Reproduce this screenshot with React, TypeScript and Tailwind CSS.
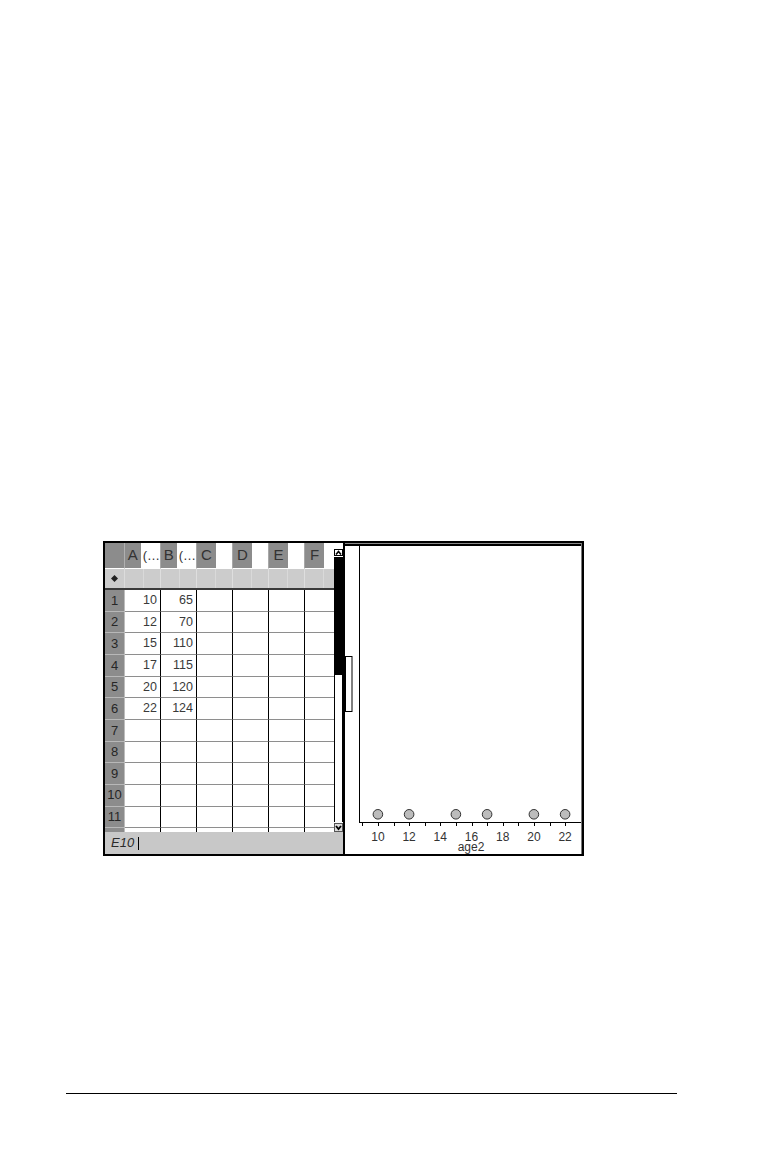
import React from "react";

const data: [string, string][] = [
  ["10", "65"],
  ["12", "70"],
  ["15", "110"],
  ["17", "115"],
  ["20", "120"],
  ["22", "124"],
];

const cols = [
  { letter: "A", name: "(…" },
  { letter: "B", name: "(…" },
  { letter: "C", name: "" },
  { letter: "D", name: "" },
  { letter: "E", name: "" },
  { letter: "F", name: "" },
];

const dots = [10, 12, 15, 17, 20, 22];
const xOf = (v: number) => 362.3 + 15.6 * (v - 9);

const Scrollbar = () => (
  <div className="flex w-[9px] flex-col bg-white">
    <div className="h-[6px]" />
    {/* up arrow */}
    <div className="h-[7px] border border-black bg-white">
      <svg width="7" height="5" viewBox="0 0 7 5" className="block">
        <polyline points="1,4.5 3.5,1.5 6,4.5" fill="none" stroke="#000" strokeWidth="1.6" />
      </svg>
    </div>
    <div className="mt-px flex h-[265px] flex-col border-x border-black">
      <div className="h-[118px] bg-black" />
    </div>
    {/* down arrow */}
    <div className="mt-px h-[9px] border border-[#555] bg-[#dcdcdc]">
      <svg width="7" height="7" viewBox="0 0 7 7" className="block">
        <polyline points="1,2 3.5,5 6,2" fill="none" stroke="#000" strokeWidth="1.8" />
      </svg>
    </div>
  </div>
);

const Spreadsheet = () => (
  <div className="flex w-[238px] flex-col">
    <div className="flex h-[289px]">
      <div className="flex w-[229px] flex-col">
        {/* column headers */}
        <div className="grid h-[26px] grid-cols-[20px_36px_36px_36px_36px_36px_29px]">
          <div className="border-r border-b border-r-[#b0b0b0] border-b-white bg-[#8c8c8c]" />
          {cols.map((c, i) => (
            <div
              key={c.letter}
              className={`flex border-b border-b-white ${i < 5 ? "border-r border-r-[#a8a8a8]" : ""}`}
            >
              <div className="flex w-[19px] items-center justify-center bg-[#8c8c8c] text-[15px] text-[#333]">
                {c.letter}
              </div>
              <div className="flex flex-1 items-center bg-white pl-[2px] text-[13px] text-[#333]">
                {c.name}
              </div>
            </div>
          ))}
        </div>

        {/* formula row */}
        <div className="grid h-[21px] grid-cols-[20px_36px_36px_36px_36px_36px_29px] border-b-2 border-b-[#3a3a3a] bg-[#cccccc]">
          <div className="flex items-center justify-center border-r border-r-[#dcdcdc]">
            <svg width="7" height="7" viewBox="0 0 7 7">
              <polygon points="3.5,0 7,3.5 3.5,7 0,3.5" fill="#222" />
            </svg>
          </div>
          {cols.map((c, i) => (
            <div key={c.letter} className={`flex ${i < 5 ? "border-r border-r-[#dedede]" : ""}`}>
              <div className="w-[19px] border-r border-r-[#d9d9d9]" />
              <div className="flex-1" />
            </div>
          ))}
        </div>

        {/* data rows */}
        <div className="flex-1 overflow-hidden">
          {Array.from({ length: 12 }).map((_, r) => (
            <div
              key={r}
              className="grid h-[21.67px] grid-cols-[20px_36px_36px_36px_36px_36px_29px] text-[12.5px] text-[#3a3a3a]"
            >
              <div className="flex items-center justify-center border-r border-b border-r-[#bdbdbd] border-b-[#b8b8b8] bg-[#8c8c8c] text-[13px] text-[#262626]">
                {r < 11 ? r + 1 : ""}
              </div>
              {cols.map((c, i) => (
                <div
                  key={c.letter}
                  className={`flex items-center justify-end border-b border-b-[#8e8e8e] bg-white pr-[3px] ${i < 5 ? "border-r border-r-black" : ""}`}
                >
                  {i < 2 && data[r] ? data[r][i] : ""}
                </div>
              ))}
            </div>
          ))}
        </div>
      </div>
      <Scrollbar />
    </div>

    {/* entry line */}
    <div className="flex h-[22px] items-center bg-[#c8c8c8] pl-[6px] text-[13px] text-[#2a2a2a]">
      <span className="italic">E10</span>
      <span className="ml-[4px] h-[13px] w-px bg-black" />
    </div>
  </div>
);

const DotPlot = () => (
  <div className="flex w-[237px] flex-col border-r border-r-[#7a7a7a]">
    <div className="h-px bg-[#8a8a8a]" />
    <div className="h-[2px] bg-black" />
    <svg width="236" height="308" viewBox="345 546 236 308" className="block bg-white">
      <line x1="359.5" y1="546" x2="359.5" y2="823" stroke="#000" strokeWidth="1" />
      <line x1="359" y1="822.5" x2="581" y2="822.5" stroke="#000" strokeWidth="1" />
      {Array.from({ length: 15 }).map((_, k) => {
        const x = Math.round(xOf(9 + k)) + 0.5;
        return <line key={k} x1={x} y1="822" x2={x} y2="826" stroke="#000" strokeWidth="1" />;
      })}
      {[10, 12, 14, 16, 18, 20, 22].map((v) => (
        <text
          key={v}
          x={xOf(v)}
          y="841"
          textAnchor="middle"
          fontSize="12"
          fill="#333"
          fontFamily="'Liberation Sans', sans-serif"
        >
          {v}
        </text>
      ))}
      <text
        x="471"
        y="851"
        textAnchor="middle"
        fontSize="12"
        fill="#333"
        fontFamily="'Liberation Sans', sans-serif"
      >
        age2
      </text>
      {dots.map((v) => (
        <circle key={v} cx={xOf(v)} cy="814.3" r="4.8" fill="#bcbcbc" stroke="#333" strokeWidth="1" />
      ))}
      {/* split handle */}
      <rect x="345.5" y="656.5" width="6.5" height="55" fill="#fff" stroke="#000" strokeWidth="1" />
    </svg>
  </div>
);

export default function App() {
  return (
    <div className="h-[1160px] w-[764px] overflow-hidden bg-white font-['Liberation_Sans',sans-serif]">
      <div className="ml-[103px] mt-[541px] flex h-[315px] w-[481px] border-2 border-black">
        <Spreadsheet />
        <div className="w-[2px] bg-black" />
        <DotPlot />
      </div>
      <div className="ml-[66px] mt-[237px] h-px w-[611px] bg-black" />
    </div>
  );
}
